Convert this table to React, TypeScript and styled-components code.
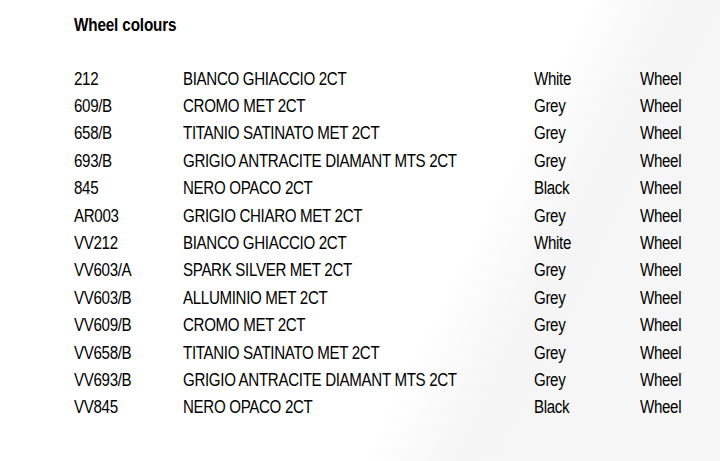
import React from 'react'
import styled, { createGlobalStyle } from 'styled-components'

const GlobalStyle = createGlobalStyle`
    html, body {
        margin: 0;
        padding: 0;
    }
    body {
        font-family: "Liberation Sans", Arial, sans-serif;
        color: #000;
    }
`

const Page = styled.div`
    width: 720px;
    height: 461px;
    box-sizing: border-box;
    padding: 13px 0 0 74px;
    overflow: hidden;
    background: linear-gradient(116deg, #ffffff 0%, #ffffff 62%, #f5f5f5 72%, #f7f7f7 100%);
`

// the source pdf uses a condensed face, so squeeze the text horizontally
const Heading = styled.h2`
    margin: 0 0 28px;
    font-size: 18px;
    line-height: 24px;
    font-weight: bold;
    letter-spacing: -0.2px;
    transform: scaleX(0.85);
    transform-origin: left center;
`

const Table = styled.div`
    display: flex;
    flex-direction: column;
`

const Row = styled.div`
    display: grid;
    grid-template-columns: 109px 351px 106px auto;
    height: 27.4px;
    align-items: center;
    font-size: 18px;
    letter-spacing: -0.4px;
    white-space: nowrap;
`

const Cell = styled.span`
    display: inline-block;
    line-height: 20px;
    transform: scaleX(0.84);
    transform-origin: left center;
`

type Colour = {
    code: string
    name: string
    shade: string
    kind: string
}

const colours: Colour[] = [
    { code: '212', name: 'BIANCO GHIACCIO 2CT', shade: 'White', kind: 'Wheel' },
    { code: '609/B', name: 'CROMO MET 2CT', shade: 'Grey', kind: 'Wheel' },
    { code: '658/B', name: 'TITANIO SATINATO MET 2CT', shade: 'Grey', kind: 'Wheel' },
    { code: '693/B', name: 'GRIGIO ANTRACITE DIAMANT MTS 2CT', shade: 'Grey', kind: 'Wheel' },
    { code: '845', name: 'NERO OPACO 2CT', shade: 'Black', kind: 'Wheel' },
    { code: 'AR003', name: 'GRIGIO CHIARO MET 2CT', shade: 'Grey', kind: 'Wheel' },
    { code: 'VV212', name: 'BIANCO GHIACCIO 2CT', shade: 'White', kind: 'Wheel' },
    { code: 'VV603/A', name: 'SPARK SILVER MET 2CT', shade: 'Grey', kind: 'Wheel' },
    { code: 'VV603/B', name: 'ALLUMINIO MET 2CT', shade: 'Grey', kind: 'Wheel' },
    { code: 'VV609/B', name: 'CROMO MET 2CT', shade: 'Grey', kind: 'Wheel' },
    { code: 'VV658/B', name: 'TITANIO SATINATO MET 2CT', shade: 'Grey', kind: 'Wheel' },
    { code: 'VV693/B', name: 'GRIGIO ANTRACITE DIAMANT MTS 2CT', shade: 'Grey', kind: 'Wheel' },
    { code: 'VV845', name: 'NERO OPACO 2CT', shade: 'Black', kind: 'Wheel' },
]

export default function App() {
    return (
        <>
            <GlobalStyle />
            <Page>
                <Heading>Wheel colours</Heading>
                <Table>
                    {colours.map(c => (
                        <Row key={c.code}>
                            <Cell>{c.code}</Cell>
                            <Cell>{c.name}</Cell>
                            <Cell>{c.shade}</Cell>
                            <Cell>{c.kind}</Cell>
                        </Row>
                    ))}
                </Table>
            </Page>
        </>
    )
}
